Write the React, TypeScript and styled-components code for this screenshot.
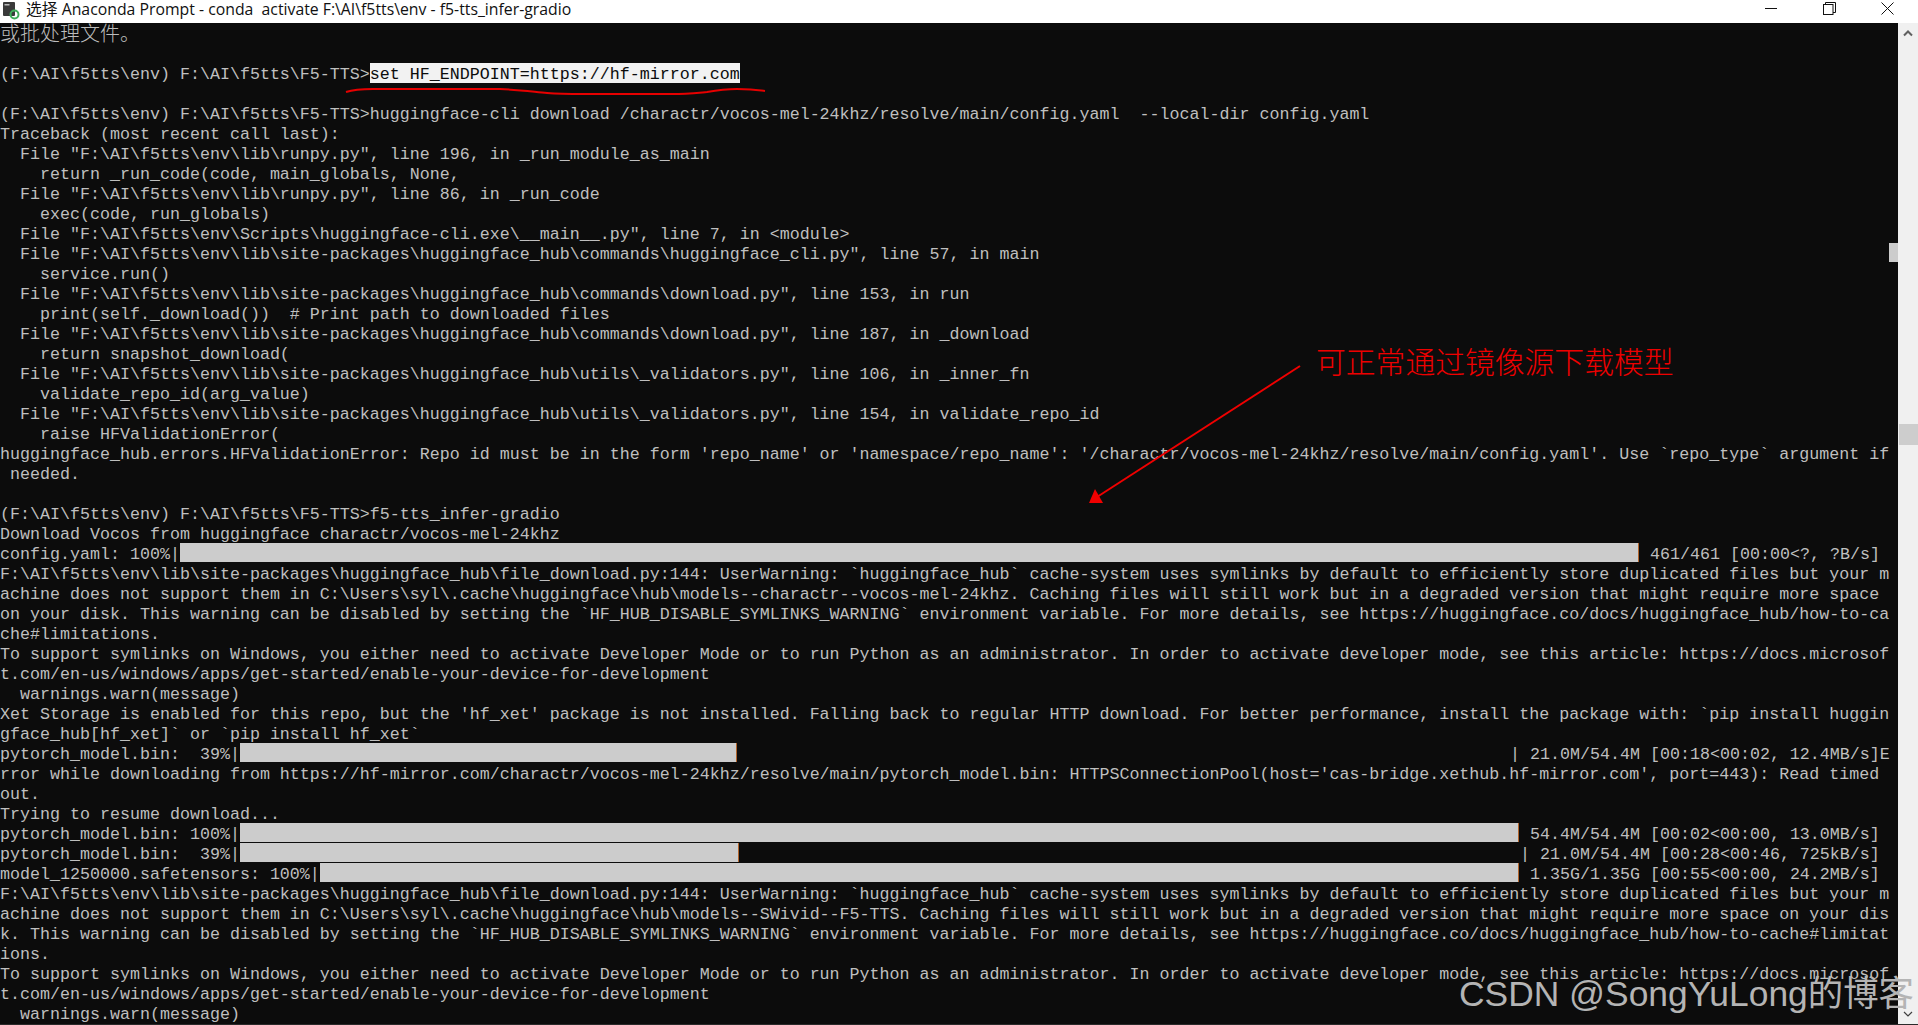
import React from 'react';
import styled, { createGlobalStyle } from 'styled-components';

const Global = createGlobalStyle`
  html, body { margin: 0; padding: 0; background: #0c0c0c; overflow: hidden; }
  #root { width: 1918px; height: 1025px; }
`;

const Page = styled.div`
  position: relative;
  display: flex;
  flex-direction: column;
  width: 1918px;
  height: 1025px;
  overflow: hidden;
`;

const TitleBar = styled.header`
  position: relative;
  z-index: 1;
  display: flex;
  align-items: flex-start;
  height: 23px;
  flex: none;
  background: #fff;
  color: #111;
`;

const AppIcon = styled.svg`
  width: 18px;
  height: 18px;
  margin: 2px 6px 0 2px;
  flex: none;
`;

const Title = styled.span`
  font: 15.8px/19px "Open Sans", "Noto Sans CJK SC", sans-serif;
  white-space: pre;
  flex: 1;
`;

const Controls = styled.div`
  display: flex;
  padding-right: 2px;
`;

const ControlButton = styled.button`
  width: 58px;
  height: 16px;
  padding: 0;
  border: 0;
  background: none;
  display: flex;
  align-items: center;
  justify-content: center;
`;

const Body = styled.div`
  display: flex;
  flex: 1;
  min-height: 0;
`;

const Console = styled.main`
  position: relative;
  flex: 1;
  background: #0c0c0c;
  color: #bfbfbf;
  font-family: "Liberation Mono", "Noto Sans CJK SC", monospace;
  font-size: 16.667px;
  line-height: 24px;
`;

const Row = styled.div`
  display: flex;
  height: 20px;
  white-space: pre;
`;

const Wide = styled.span`
  font: 300 20px/20px "Noto Sans CJK SC", sans-serif;
  color: #bdbdbd;
`;

const Selected = styled.span`
  background: #f2f2f2;
  color: #0c0c0c;
  height: 20px;
`;

const Label = styled.span<{ $cols: number }>`
  width: ${(p) => p.$cols * 10}px;
  flex: none;
`;

const Track = styled.span<{ $cols: number }>`
  width: ${(p) => p.$cols * 10}px;
  flex: none;
  height: 19px;
`;

const Fill = styled.span<{ $px: number }>`
  display: block;
  box-sizing: border-box;
  width: ${(p) => p.$px}px;
  height: 19px;
  background: #cccccc;
  border-right: 1px solid #b0642c;
`;

const Tab = styled.div`
  position: absolute;
  top: 220px;
  right: 0;
  width: 9px;
  height: 19px;
  background: #cccccc;
`;

const ScrollBar = styled.aside`
  display: flex;
  flex-direction: column;
  width: 20px;
  flex: none;
  background: #f0f0f0;
`;

const ScrollButton = styled.div<{ $end?: boolean }>`
  display: flex;
  align-items: center;
  justify-content: center;
  height: 20px;
  flex: none;
  margin-top: ${(p) => (p.$end ? 'auto' : '0')};
`;

const Thumb = styled.div`
  margin: 381px 0 0 1px;
  height: 21px;
  background: #cdcdcd;
  flex: none;
`;

const BottomEdge = styled.div`
  height: 1px;
  flex: none;
  background: #2a2a2a;
`;

const Overlay = styled.svg`
  position: absolute;
  left: 0;
  top: 0;
  pointer-events: none;
`;

const Callout = styled.div`
  position: absolute;
  left: 1316px;
  top: 342px;
  font: 300 29.8px/36px "Noto Sans CJK SC", sans-serif;
  color: #ee0000;
  white-space: pre;
`;

const Watermark = styled.div`
  position: absolute;
  left: 1459px;
  top: 972px;
  font: 35.4px/44px "Liberation Sans", "Noto Sans CJK SC", sans-serif;
  color: #b4b4b4;
  white-space: pre;
`;

const PROMPT = '(F:\\AI\\f5tts\\env) F:\\AI\\f5tts\\F5-TTS>';
const HUB = '  File "F:\\AI\\f5tts\\env\\lib\\site-packages\\huggingface_hub\\';

type Progress = { label: string; labelCols: number; trackCols: number; fill: number; rest: string };

const prog = (label: string, trackCols: number, fill: number, rest: string): Progress => ({
  label,
  labelCols: label.length,
  trackCols,
  fill,
  rest,
});

type Line = string | Progress;

const LINES: Line[] = [
  '',
  '',
  '',
  '',
  PROMPT + 'huggingface-cli download /charactr/vocos-mel-24khz/resolve/main/config.yaml  --local-dir config.yaml',
  'Traceback (most recent call last):',
  '  File "F:\\AI\\f5tts\\env\\lib\\runpy.py", line 196, in _run_module_as_main',
  '    return _run_code(code, main_globals, None,',
  '  File "F:\\AI\\f5tts\\env\\lib\\runpy.py", line 86, in _run_code',
  '    exec(code, run_globals)',
  '  File "F:\\AI\\f5tts\\env\\Scripts\\huggingface-cli.exe\\__main__.py", line 7, in <module>',
  HUB + 'commands\\huggingface_cli.py", line 57, in main',
  '    service.run()',
  HUB + 'commands\\download.py", line 153, in run',
  '    print(self._download())  # Print path to downloaded files',
  HUB + 'commands\\download.py", line 187, in _download',
  '    return snapshot_download(',
  HUB + 'utils\\_validators.py", line 106, in _inner_fn',
  '    validate_repo_id(arg_value)',
  HUB + 'utils\\_validators.py", line 154, in validate_repo_id',
  '    raise HFValidationError(',
  "huggingface_hub.errors.HFValidationError: Repo id must be in the form 'repo_name' or 'namespace/repo_name': '/charactr/vocos-mel-24khz/resolve/main/config.yaml'. Use `repo_type` argument if",
  ' needed.',
  '',
  PROMPT + 'f5-tts_infer-gradio',
  'Download Vocos from huggingface charactr/vocos-mel-24khz',
  prog('config.yaml: 100%|', 146, 1459, ' 461/461 [00:00<?, ?B/s]'),
  'F:\\AI\\f5tts\\env\\lib\\site-packages\\huggingface_hub\\file_download.py:144: UserWarning: `huggingface_hub` cache-system uses symlinks by default to efficiently store duplicated files but your m',
  'achine does not support them in C:\\Users\\syl\\.cache\\huggingface\\hub\\models--charactr--vocos-mel-24khz. Caching files will still work but in a degraded version that might require more space',
  'on your disk. This warning can be disabled by setting the `HF_HUB_DISABLE_SYMLINKS_WARNING` environment variable. For more details, see https://huggingface.co/docs/huggingface_hub/how-to-ca',
  'che#limitations.',
  'To support symlinks on Windows, you either need to activate Developer Mode or to run Python as an administrator. In order to activate developer mode, see this article: https://docs.microsof',
  't.com/en-us/windows/apps/get-started/enable-your-device-for-development',
  '  warnings.warn(message)',
  "Xet Storage is enabled for this repo, but the 'hf_xet' package is not installed. Falling back to regular HTTP download. For better performance, install the package with: `pip install huggin",
  'gface_hub[hf_xet]` or `pip install hf_xet`',
  prog('pytorch_model.bin:  39%|', 127, 497, '| 21.0M/54.4M [00:18<00:02, 12.4MB/s]E'),
  "rror while downloading from https://hf-mirror.com/charactr/vocos-mel-24khz/resolve/main/pytorch_model.bin: HTTPSConnectionPool(host='cas-bridge.xethub.hf-mirror.com', port=443): Read timed",
  'out.',
  'Trying to resume download...',
  prog('pytorch_model.bin: 100%|', 128, 1279, ' 54.4M/54.4M [00:02<00:00, 13.0MB/s]'),
  prog('pytorch_model.bin:  39%|', 128, 499, '| 21.0M/54.4M [00:28<00:46, 725kB/s]'),
  prog('model_1250000.safetensors: 100%|', 120, 1199, ' 1.35G/1.35G [00:55<00:00, 24.2MB/s]'),
  'F:\\AI\\f5tts\\env\\lib\\site-packages\\huggingface_hub\\file_download.py:144: UserWarning: `huggingface_hub` cache-system uses symlinks by default to efficiently store duplicated files but your m',
  'achine does not support them in C:\\Users\\syl\\.cache\\huggingface\\hub\\models--SWivid--F5-TTS. Caching files will still work but in a degraded version that might require more space on your dis',
  'k. This warning can be disabled by setting the `HF_HUB_DISABLE_SYMLINKS_WARNING` environment variable. For more details, see https://huggingface.co/docs/huggingface_hub/how-to-cache#limitat',
  'ions.',
  'To support symlinks on Windows, you either need to activate Developer Mode or to run Python as an administrator. In order to activate developer mode, see this article: https://docs.microsof',
  't.com/en-us/windows/apps/get-started/enable-your-device-for-development',
  '  warnings.warn(message)',
];

function renderLine(line: Line, i: number) {
  if (i === 0) {
    return (
      <Row key={i}>
        <Wide>或批处理文件。</Wide>
      </Row>
    );
  }
  if (i === 2) {
    return (
      <Row key={i}>
        {PROMPT}
        <Selected>set HF_ENDPOINT=https://hf-mirror.com</Selected>
      </Row>
    );
  }
  if (typeof line === 'string') return <Row key={i}>{line}</Row>;
  return (
    <Row key={i}>
      <Label $cols={line.labelCols}>{line.label}</Label>
      <Track $cols={line.trackCols}>
        <Fill $px={line.fill} />
      </Track>
      {line.rest}
    </Row>
  );
}

export default function App() {
  return (
    <Page>
      <Global />
      <TitleBar>
        <AppIcon viewBox="0 0 18 18">
          <rect x="1" y="0" width="12" height="14" rx="1" fill="#3a3a3a" />
          <rect x="2.5" y="2" width="5" height="1.5" fill="#bbb" />
          <circle cx="12.5" cy="12.5" r="4" fill="none" stroke="#3fae5a" strokeWidth="2" />
        </AppIcon>
        <Title>{'选择 Anaconda Prompt - conda  activate F:\\AI\\f5tts\\env - f5-tts_infer-gradio'}</Title>
        <Controls>
          <ControlButton aria-label="minimize">
            <svg width="12" height="12" viewBox="0 0 12 12">
              <path d="M0 6.5H12" stroke="#111" strokeWidth="1" />
            </svg>
          </ControlButton>
          <ControlButton aria-label="restore">
            <svg width="13" height="13" viewBox="0 0 13 13" fill="none" stroke="#111" strokeWidth="1">
              <rect x="0.5" y="2.5" width="9.5" height="10" />
              <path d="M2.5 2.5V0.5H12.5V10.5H10" />
            </svg>
          </ControlButton>
          <ControlButton aria-label="close">
            <svg width="13" height="13" viewBox="0 0 13 13" fill="none" stroke="#111" strokeWidth="1">
              <path d="M0.5 0.5L12.5 12.5M12.5 0.5L0.5 12.5" />
            </svg>
          </ControlButton>
        </Controls>
      </TitleBar>
      <Body>
        <Console>
          {LINES.map(renderLine)}
          <Tab />
        </Console>
        <ScrollBar>
          <ScrollButton>
            <svg width="10" height="8" viewBox="0 0 10 8" fill="none" stroke="#606060" strokeWidth="2">
              <path d="M1 6.5L5 2.5L9 6.5" />
            </svg>
          </ScrollButton>
          <Thumb />
          <ScrollButton $end>
            <svg width="10" height="8" viewBox="0 0 10 8" fill="none" stroke="#404040" strokeWidth="1.2">
              <path d="M1 2L5 6L9 2" />
            </svg>
          </ScrollButton>
        </ScrollBar>
      </Body>
      <BottomEdge />
      <Overlay width="1918" height="1025" viewBox="0 0 1918 1025">
        <path
          d="M346 92 C352 90 362 89 373 89 L500 89 C520 90 535 92 547 93 C560 94 572 94 583 94 L673 94 C685 94 695 93 707 92 C718 90 728 89 737 89 C748 89 758 90 765 91"
          fill="none"
          stroke="#e60000"
          strokeWidth="2"
        />
        <path d="M1300 366L1097 497" stroke="#f00000" strokeWidth="2" />
        <path d="M1095 489L1103 503L1089 503Z" fill="#f00000" />
      </Overlay>
      <Callout>可正常通过镜像源下载模型</Callout>
      <Watermark>CSDN @SongYuLong的博客</Watermark>
    </Page>
  );
}
